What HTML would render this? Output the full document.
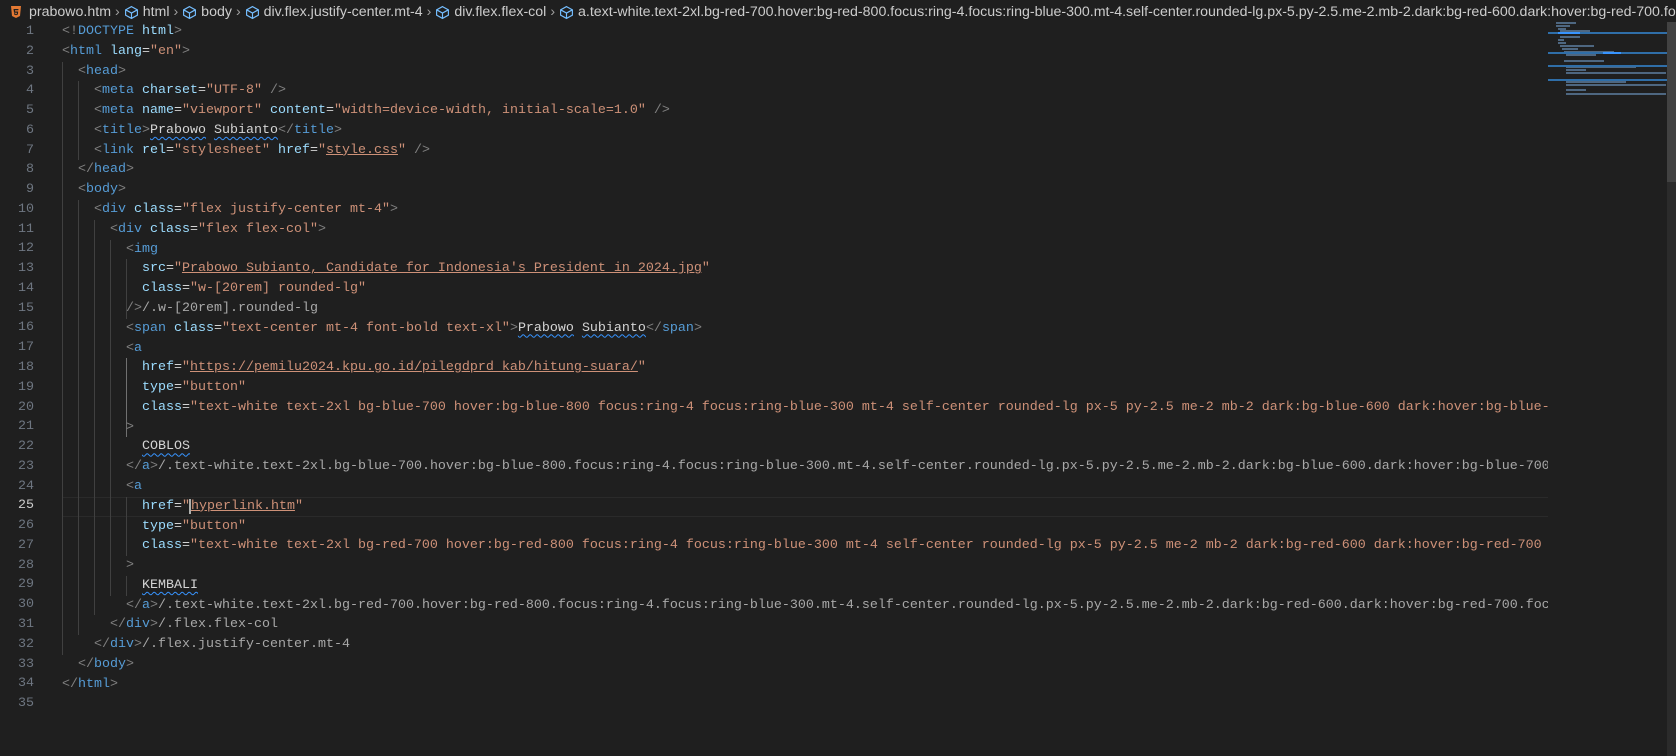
<!DOCTYPE html>
<html><head><meta charset="utf-8"><style>
body{margin:0;width:1676px;height:756px;background:#1f1f1f;overflow:hidden;position:relative;font-family:"Liberation Mono",monospace}
#bc{position:absolute;left:0;top:0;height:24px;width:1676px;font:14.2px "Liberation Sans",sans-serif;color:#cccccc;white-space:nowrap;overflow:hidden;line-height:24px}
#bc span{display:inline-block;vertical-align:middle}
#bc svg{vertical-align:middle}
.sep{color:#a0a0a0;margin:0 4px}
#nums{position:absolute;left:0;top:22px;width:34px;text-align:right;font-size:13.33px;line-height:19.78px;color:#6e7681}
#code{position:absolute;left:62px;top:22px;width:1486px;overflow:hidden;font-size:13.33px;line-height:19.78px;color:#d4d4d4;white-space:pre}
.g{color:#808080}.t{color:#569cd6}.a{color:#9cdcfe}.s{color:#ce9178}.h{color:#a8a8a8}
.w{text-decoration:underline wavy #3794ff;text-decoration-thickness:1px;text-underline-offset:3px}
.u{text-decoration:underline;text-decoration-color:#ce9178}
.guide{position:absolute;width:1px;background:#404040}
.ln{height:19.78px}
</style></head><body>
<div id="bc">
<svg width="14" height="14" viewBox="0 0 14 14" style="margin-left:9px;margin-right:6px"><path d="M2 1h10l-1 10-4 2-4-2z" fill="#e37933"/><path d="M4.5 4h5l-.2 1.3H6l.1 1.2h3.1l-.3 3L7 10.2 5.1 9.5 5 8.3h1.2l.1.6.7.3.8-.3.1-1.1H5z" fill="#1f1f1f"/></svg><span>prabowo.htm</span><span class="sep">›</span><svg width="15" height="15" viewBox="0 0 14 14"><path d="M7 1.5 12.5 4.5v5L7 12.5 1.5 9.5v-5zM1.5 4.5 7 7.5l5.5-3M7 7.5v5" fill="none" stroke="#75beff" stroke-width="1.1"/></svg><span>&nbsp;html</span><span class="sep">›</span><svg width="15" height="15" viewBox="0 0 14 14"><path d="M7 1.5 12.5 4.5v5L7 12.5 1.5 9.5v-5zM1.5 4.5 7 7.5l5.5-3M7 7.5v5" fill="none" stroke="#75beff" stroke-width="1.1"/></svg><span>&nbsp;body</span><span class="sep">›</span><svg width="15" height="15" viewBox="0 0 14 14"><path d="M7 1.5 12.5 4.5v5L7 12.5 1.5 9.5v-5zM1.5 4.5 7 7.5l5.5-3M7 7.5v5" fill="none" stroke="#75beff" stroke-width="1.1"/></svg><span>&nbsp;div.flex.justify-center.mt-4</span><span class="sep">›</span><svg width="15" height="15" viewBox="0 0 14 14"><path d="M7 1.5 12.5 4.5v5L7 12.5 1.5 9.5v-5zM1.5 4.5 7 7.5l5.5-3M7 7.5v5" fill="none" stroke="#75beff" stroke-width="1.1"/></svg><span>&nbsp;div.flex.flex-col</span><span class="sep">›</span><svg width="15" height="15" viewBox="0 0 14 14"><path d="M7 1.5 12.5 4.5v5L7 12.5 1.5 9.5v-5zM1.5 4.5 7 7.5l5.5-3M7 7.5v5" fill="none" stroke="#75beff" stroke-width="1.1"/></svg><span>&nbsp;a.text-white.text-2xl.bg-red-700.hover:bg-red-800.focus:ring-4.focus:ring-blue-300.mt-4.self-center.rounded-lg.px-5.py-2.5.me-2.mb-2.dark:bg-red-600.dark:hover:bg-red-700.focus:outline-none</span>
</div>

<div style="position:absolute;left:62px;top:497px;width:1486px;height:17.8px;border-top:1px solid #2a2a2a;border-bottom:1px solid #2a2a2a"></div>

<div class="guide" style="left:62px;top:61.6px;height:593.4px"></div>
<div class="guide" style="left:78px;top:81.3px;height:79.1px"></div>
<div class="guide" style="left:78px;top:200px;height:435px"></div>
<div class="guide" style="left:94px;top:219.8px;height:395.6px"></div>
<div class="guide" style="left:110px;top:239.6px;height:356px"></div>
<div class="guide" style="left:126px;top:259.4px;height:59.3px"></div>
<div class="guide" style="left:126px;top:358.3px;height:59.3px;background:#707070"></div>
<div class="guide" style="left:126px;top:417.6px;height:19.8px;background:#707070"></div>
<div class="guide" style="left:126px;top:496.7px;height:59.3px"></div>
<div class="guide" style="left:126px;top:576px;height:19.8px"></div>

<div id="nums">
<div class="ln">1</div><div class="ln">2</div><div class="ln">3</div><div class="ln">4</div><div class="ln">5</div><div class="ln">6</div><div class="ln">7</div><div class="ln">8</div><div class="ln">9</div><div class="ln">10</div><div class="ln">11</div><div class="ln">12</div><div class="ln">13</div><div class="ln">14</div><div class="ln">15</div><div class="ln">16</div><div class="ln">17</div><div class="ln">18</div><div class="ln">19</div><div class="ln">20</div><div class="ln">21</div><div class="ln">22</div><div class="ln">23</div><div class="ln">24</div><div class="ln" style="color:#cccccc">25</div><div class="ln">26</div><div class="ln">27</div><div class="ln">28</div><div class="ln">29</div><div class="ln">30</div><div class="ln">31</div><div class="ln">32</div><div class="ln">33</div><div class="ln">34</div><div class="ln">35</div>
</div>

<div id="code"><span class="g">&lt;!</span><span class="t">DOCTYPE</span> <span class="a">html</span><span class="g">&gt;</span>
<span class="g">&lt;</span><span class="t">html</span> <span class="a">lang</span>=<span class="s">"en"</span><span class="g">&gt;</span>
  <span class="g">&lt;</span><span class="t">head</span><span class="g">&gt;</span>
    <span class="g">&lt;</span><span class="t">meta</span> <span class="a">charset</span>=<span class="s">"UTF-8"</span> <span class="g">/&gt;</span>
    <span class="g">&lt;</span><span class="t">meta</span> <span class="a">name</span>=<span class="s">"viewport"</span> <span class="a">content</span>=<span class="s">"width=device-width, initial-scale=1.0"</span> <span class="g">/&gt;</span>
    <span class="g">&lt;</span><span class="t">title</span><span class="g">&gt;</span><span class="w">Prabowo</span> <span class="w">Subianto</span><span class="g">&lt;/</span><span class="t">title</span><span class="g">&gt;</span>
    <span class="g">&lt;</span><span class="t">link</span> <span class="a">rel</span>=<span class="s">"stylesheet"</span> <span class="a">href</span>=<span class="s">"<span class="u">style.css</span>"</span> <span class="g">/&gt;</span>
  <span class="g">&lt;/</span><span class="t">head</span><span class="g">&gt;</span>
  <span class="g">&lt;</span><span class="t">body</span><span class="g">&gt;</span>
    <span class="g">&lt;</span><span class="t">div</span> <span class="a">class</span>=<span class="s">"flex justify-center mt-4"</span><span class="g">&gt;</span>
      <span class="g">&lt;</span><span class="t">div</span> <span class="a">class</span>=<span class="s">"flex flex-col"</span><span class="g">&gt;</span>
        <span class="g">&lt;</span><span class="t">img</span>
          <span class="a">src</span>=<span class="s">"<span class="u">Prabowo_Subianto,_Candidate_for_Indonesia's_President_in_2024.jpg</span>"</span>
          <span class="a">class</span>=<span class="s">"w-[20rem] rounded-lg"</span>
        <span class="g">/&gt;</span><span class="h">/.w-[20rem].rounded-lg</span>
        <span class="g">&lt;</span><span class="t">span</span> <span class="a">class</span>=<span class="s">"text-center mt-4 font-bold text-xl"</span><span class="g">&gt;</span><span class="w">Prabowo</span> <span class="w">Subianto</span><span class="g">&lt;/</span><span class="t">span</span><span class="g">&gt;</span>
        <span class="g">&lt;</span><span class="t">a</span>
          <span class="a">href</span>=<span class="s">"<span class="u">https://pemilu2024.kpu.go.id/pilegdprd_kab/hitung-suara/</span>"</span>
          <span class="a">type</span>=<span class="s">"button"</span>
          <span class="a">class</span>=<span class="s">"text-white text-2xl bg-blue-700 hover:bg-blue-800 focus:ring-4 focus:ring-blue-300 mt-4 self-center rounded-lg px-5 py-2.5 me-2 mb-2 dark:bg-blue-600 dark:hover:bg-blue-700 focus:outline-none"</span>
        <span class="g">&gt;</span>
          <span class="w">COBLOS</span>
        <span class="g">&lt;/</span><span class="t">a</span><span class="g">&gt;</span><span class="h">/.text-white.text-2xl.bg-blue-700.hover:bg-blue-800.focus:ring-4.focus:ring-blue-300.mt-4.self-center.rounded-lg.px-5.py-2.5.me-2.mb-2.dark:bg-blue-600.dark:hover:bg-blue-700.focus:outline-none</span>
        <span class="g">&lt;</span><span class="t">a</span>
          <span class="a">href</span>=<span class="s">"<span style="border-left:2px solid #aeafad;margin-left:-1px"></span><span class="u">hyperlink.htm</span>"</span>
          <span class="a">type</span>=<span class="s">"button"</span>
          <span class="a">class</span>=<span class="s">"text-white text-2xl bg-red-700 hover:bg-red-800 focus:ring-4 focus:ring-blue-300 mt-4 self-center rounded-lg px-5 py-2.5 me-2 mb-2 dark:bg-red-600 dark:hover:bg-red-700 focus:outline-none"</span>
        <span class="g">&gt;</span>
          <span class="w">KEMBALI</span>
        <span class="g">&lt;/</span><span class="t">a</span><span class="g">&gt;</span><span class="h">/.text-white.text-2xl.bg-red-700.hover:bg-red-800.focus:ring-4.focus:ring-blue-300.mt-4.self-center.rounded-lg.px-5.py-2.5.me-2.mb-2.dark:bg-red-600.dark:hover:bg-red-700.focus:outline-none</span>
      <span class="g">&lt;/</span><span class="t">div</span><span class="g">&gt;</span><span class="h">/.flex.flex-col</span>
    <span class="g">&lt;/</span><span class="t">div</span><span class="g">&gt;</span><span class="h">/.flex.justify-center.mt-4</span>
  <span class="g">&lt;/</span><span class="t">body</span><span class="g">&gt;</span>
<span class="g">&lt;/</span><span class="t">html</span><span class="g">&gt;</span>
</div>

<div style="position:absolute;left:1548px;top:22px;width:119px;height:734px;background:#1f1f1f">
  <svg width="119" height="80" style="position:absolute;left:0;top:0">
    <g fill="#5a7a9a" opacity="0.8">
      <rect x="8" y="0" width="20" height="2"/><rect x="8" y="3" width="14" height="2"/>
      <rect x="10" y="6" width="8" height="2"/>
      <rect x="12" y="8" width="30" height="2"/><rect x="12" y="14" width="20" height="2"/>
      <rect x="10" y="17" width="6" height="2"/><rect x="10" y="20" width="8" height="2"/>
      <rect x="12" y="23" width="34" height="2"/><rect x="14" y="26" width="16" height="2"/>
      <rect x="16" y="29" width="50" height="2"/><rect x="18" y="32" width="30" height="2"/>
      <rect x="16" y="38" width="40" height="2"/>
      <rect x="18" y="44" width="70" height="2"/><rect x="18" y="47" width="20" height="2"/>
      <rect x="18" y="50" width="100" height="2"/>
      <rect x="18" y="59" width="60" height="2"/><rect x="18" y="62" width="100" height="2"/>
      <rect x="18" y="67" width="20" height="2"/>
      <rect x="18" y="71" width="100" height="2"/>
    </g>
    <rect x="0" y="10" width="119" height="2" fill="#2f6ea8"/>
    <rect x="10" y="10" width="22" height="2" fill="#3794ff"/>
    <rect x="0" y="30" width="119" height="2" fill="#2f6ea8"/>
    <rect x="55" y="30" width="18" height="2" fill="#3794ff"/>
    <rect x="0" y="43" width="119" height="2" fill="#2f6ea8"/>
    <rect x="0" y="57" width="119" height="2" fill="#2f6ea8"/>
  </svg>
</div>
<div style="position:absolute;left:1667px;top:22px;width:9px;height:734px;background:#2b2b2b"></div>
<div style="position:absolute;left:1667px;top:22px;width:9px;height:160px;background:#424242"></div>
</body></html>
